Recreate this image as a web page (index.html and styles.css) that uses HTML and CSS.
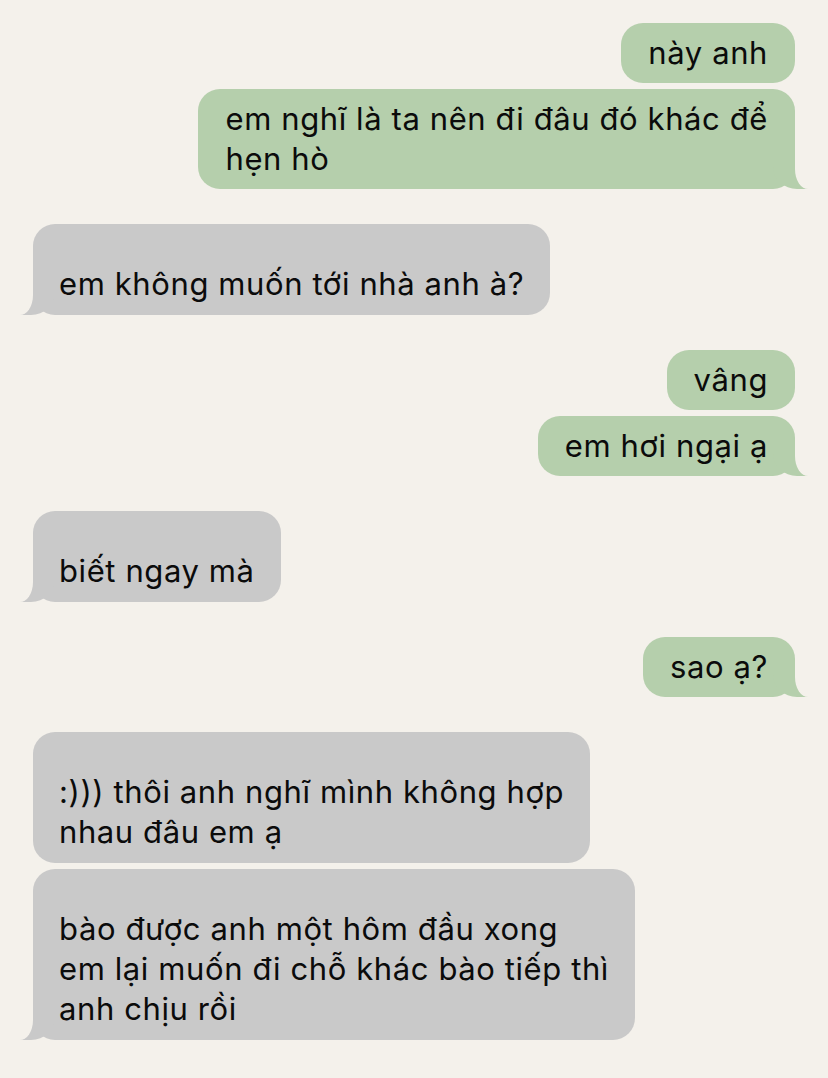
FILE: index.html
```html
<!DOCTYPE html>
<html lang="vi">
<head>
<meta charset="utf-8">
<link rel="stylesheet" href="styles.css">
</head>
<body>
<div class="chat">
  <div class="group sent">
    <div class="bubble">này anh</div>
    <div class="bubble tail">em nghĩ là ta nên đi đâu đó khác để<br>hẹn hò</div>
  </div>
  <div class="group recv">
    <div class="bubble tail">em không muốn tới nhà anh à?</div>
  </div>
  <div class="group sent">
    <div class="bubble">vâng</div>
    <div class="bubble tail">em hơi ngại ạ</div>
  </div>
  <div class="group recv">
    <div class="bubble tail">biết ngay mà</div>
  </div>
  <div class="group sent">
    <div class="bubble tail">sao ạ?</div>
  </div>
  <div class="group recv">
    <div class="bubble">:))) thôi anh nghĩ mình không hợp<br>nhau đâu em ạ</div>
    <div class="bubble tail">bào được anh một hôm đầu xong<br>em lại muốn đi chỗ khác bào tiếp thì<br>anh chịu rồi</div>
  </div>
</div>
</body>
</html>
```
FILE: styles.css
```css
html, body {
  margin: 0;
  padding: 0;
  background: #f4f1eb;
}
body {
  width: 828px;
  height: 1078px;
  overflow: hidden;
  font-family: Inter, "Noto Sans", sans-serif;
  color: #0b0b0b;
}
.chat {
  display: flex;
  flex-direction: column;
  gap: 35px;
  padding: 23px 33px 0 33px;
}
.group {
  display: flex;
  flex-direction: column;
  gap: 6px;
}
.group.sent { align-items: flex-end; }
.group.recv { align-items: flex-start; }
.bubble {
  position: relative;
  font-size: 31px;
  line-height: 40px;
  letter-spacing: 0.6px;
  border-radius: 22px;
  max-width: 640px;
}
.sent .bubble {
  background: #b5cfac;
  padding: 10px 27px 10px 27px;
}
.recv .bubble {
  background: #c9c9c9;
  padding: 40px 26px 11px 26px;
}
.bubble.tail::before,
.bubble.tail::after {
  content: "";
  position: absolute;
  bottom: 0;
  height: 32px;
}
.sent .bubble.tail::before {
  right: -14px;
  width: 36px;
  background: #b5cfac;
  border-bottom-left-radius: 24px 22px;
}
.sent .bubble.tail::after {
  right: -36px;
  width: 36px;
  background: #f4f1eb;
  border-bottom-left-radius: 13px 20px;
}
.recv .bubble.tail::before {
  left: -14px;
  width: 36px;
  background: #c9c9c9;
  border-bottom-right-radius: 24px 22px;
}
.recv .bubble.tail::after {
  left: -36px;
  width: 36px;
  background: #f4f1eb;
  border-bottom-right-radius: 13px 20px;
}
```
